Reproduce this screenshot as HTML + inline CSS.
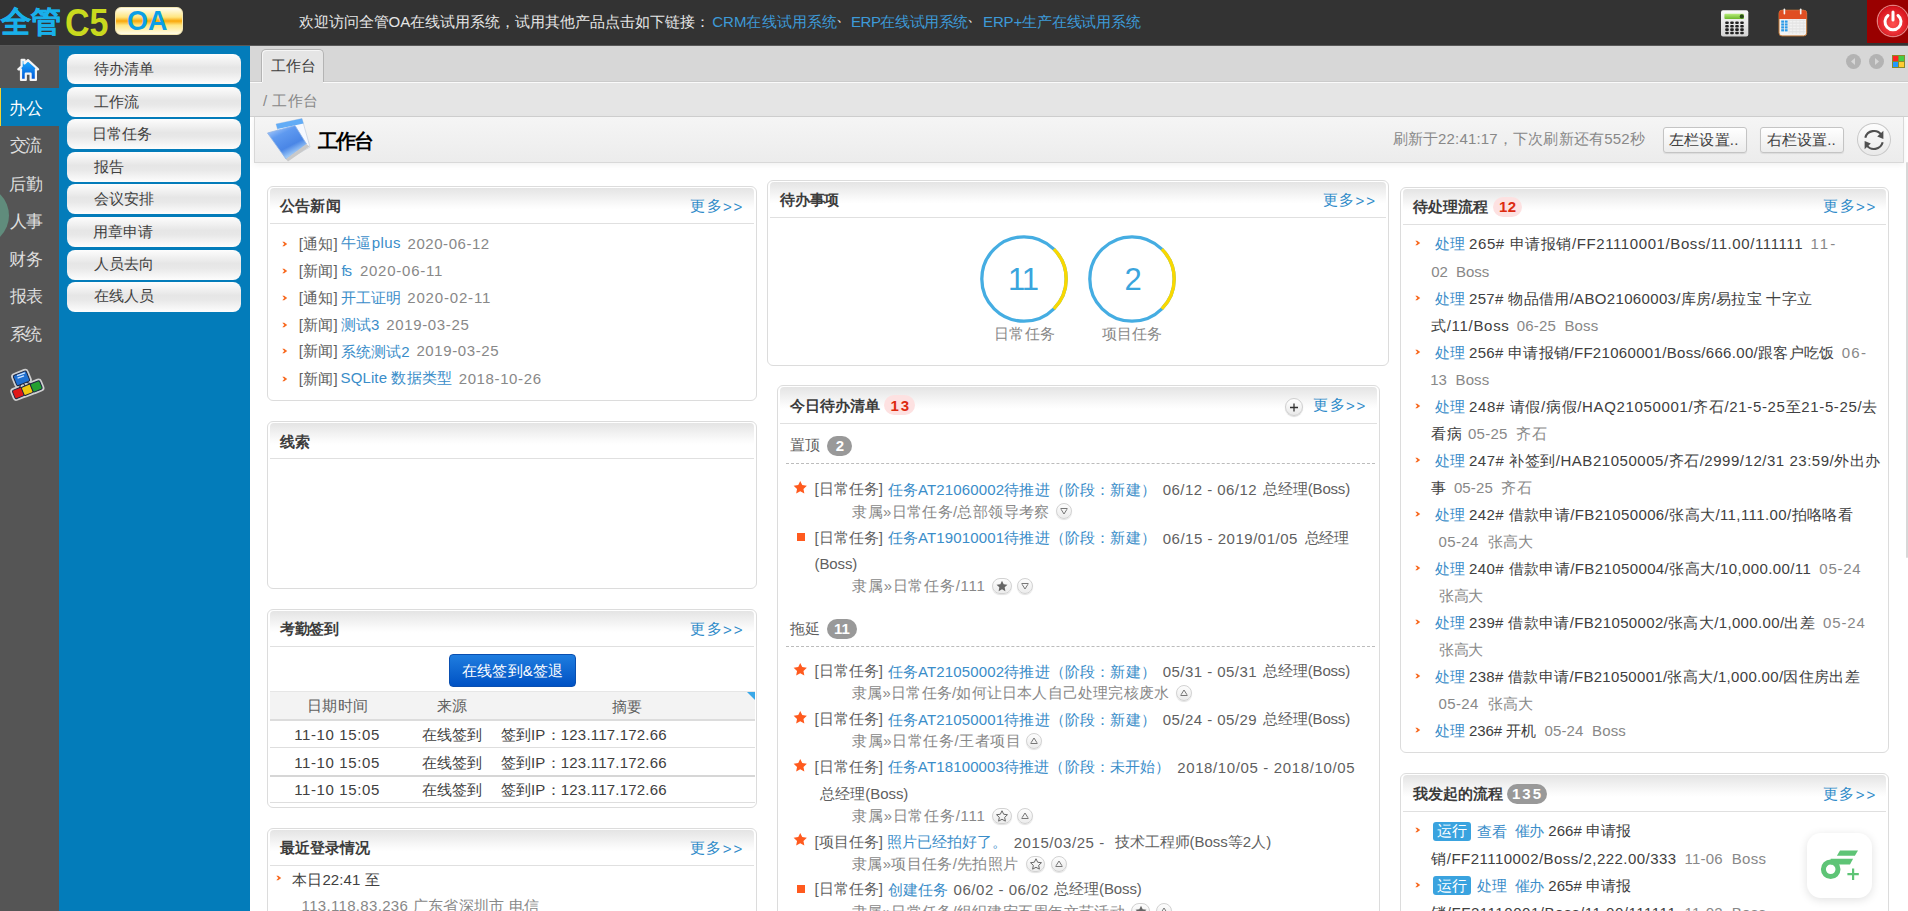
<!DOCTYPE html>
<html><head><meta charset="utf-8">
<style>
*{box-sizing:border-box}
html,body{margin:0;padding:0}
body{width:1908px;height:911px;overflow:hidden;position:relative;background:#fff;font-family:"Liberation Sans",sans-serif;font-size:15px;color:#333}
.a{position:absolute}
#hdr{left:0;top:0;width:1908px;height:46px;background:#333;border-bottom:1px solid #595959}
#nav{left:0;top:46px;width:59px;height:865px;background:#555}
#menu{left:59px;top:46px;width:191px;height:865px;background:#037cba}
#tabbar{left:250px;top:46px;width:1658px;height:36px;background:#d7d7d7;border-bottom:1px solid #cbcbcb}
#crumb{left:250px;top:82px;width:1658px;height:35px;background:#e5e5e5;border-top:1px solid #fafafa;border-bottom:1px solid #d0d0d0}
#title{left:254px;top:117px;width:1650px;height:46px;background:linear-gradient(#f5f5f5,#ececec);border:1px solid #d8d8d8;border-top:0;box-shadow:0 2px 6px rgba(0,0,0,.06)}
.btn{left:67px;width:174px;height:30px;border-radius:8px;background:linear-gradient(#fdfdfd 0%,#e6e6e6 45%,#e8e8e8 60%,#fdfdfd 100%);color:#333;font-size:15px;line-height:30px;padding-left:27px}
.nv{left:0;width:59px;text-align:left;padding-left:10px;color:#dcdcdc;font-size:16px;line-height:20px}
.pn{position:absolute;border:1px solid #dcdcdc;border-radius:6px;background:#fff;overflow:hidden}
.ph{position:absolute;left:2px;top:1px;right:2px;height:37px;border-radius:4px 4px 0 0;background:linear-gradient(#e4e4e4,#fbfbfb 50%,#fff 62%)}
.pt{position:absolute;left:12px;top:0;line-height:37px;font-weight:bold;color:#333;font-size:15px}
.more{position:absolute;right:14px;top:0;line-height:37px;color:#2e8ac8;font-size:15px}
.lk{color:#2e8ac8}
.gr{color:#777}
.tb{width:84px;height:26px;border:1px solid #c4c4c4;border-radius:3px;background:linear-gradient(#fff,#ececec);line-height:24px;text-align:center;color:#333;font-size:15px;box-shadow:0 1px 1px rgba(0,0,0,.08)}
</style></head><body>
<div id="hdr" class="a">
<div class="a" style="left:1px;top:3px;width:64px;height:36px;font-weight:900;font-size:30px;line-height:38px;color:#19b0ea;-webkit-text-stroke:0.5px #19b0ea;letter-spacing:0px;white-space:nowrap">全管</div>
<div class="a" style="left:65px;top:3px;height:36px;font-weight:bold;font-size:34px;line-height:38px;color:#c9da1e;transform:scaleY(1.12);transform-origin:0 50%;white-space:nowrap">C5</div>
<div class="a" style="left:115px;top:7px;width:68px;height:28px;border-radius:6px;background:linear-gradient(#fffef4 0%,#ffe680 35%,#f9a70a 50%,#ffe680 66%,#fffbe8 100%);border:1px solid #f3e6b0"></div>
<div class="a" style="left:127px;top:5px;font-weight:bold;font-size:27px;line-height:32px;color:#0b9fe6;white-space:nowrap">OA</div>
<svg class="a" style="left:1720px;top:9px" width="30" height="29" viewBox="0 0 30 29"><defs><linearGradient id="cg" x1="0" y1="0" x2="0" y2="1"><stop offset="0" stop-color="#fafafa"/><stop offset="1" stop-color="#d4d4d4"/></linearGradient><linearGradient id="cd" x1="0" y1="0" x2="0" y2="1"><stop offset="0" stop-color="#b8ec7a"/><stop offset="1" stop-color="#6cb82c"/></linearGradient></defs><rect x="1" y="1.2" width="27.3" height="26.2" rx="2" fill="url(#cg)"/><rect x="4.4" y="4.8" width="19.6" height="5.2" rx="1" fill="url(#cd)"/><circle cx="21.8" cy="7.4" r="2.1" fill="#2a4a1a"/><rect x="5.2" y="12.5" width="3.6" height="2.6" rx="1" fill="#222"/><rect x="10.2" y="12.5" width="3.6" height="2.6" rx="1" fill="#222"/><rect x="15.2" y="12.5" width="3.6" height="2.6" rx="1" fill="#222"/><rect x="20.2" y="12.5" width="3.6" height="2.6" rx="1" fill="#222"/><rect x="5.2" y="15.9" width="3.6" height="2.6" rx="1" fill="#222"/><rect x="10.2" y="15.9" width="3.6" height="2.6" rx="1" fill="#222"/><rect x="15.2" y="15.9" width="3.6" height="2.6" rx="1" fill="#222"/><rect x="20.2" y="15.9" width="3.6" height="2.6" rx="1" fill="#222"/><rect x="5.2" y="19.3" width="3.6" height="2.6" rx="1" fill="#222"/><rect x="10.2" y="19.3" width="3.6" height="2.6" rx="1" fill="#222"/><rect x="15.2" y="19.3" width="3.6" height="2.6" rx="1" fill="#222"/><rect x="20.2" y="19.3" width="3.6" height="2.6" rx="1" fill="#222"/><rect x="5.2" y="22.7" width="3.6" height="2.6" rx="1" fill="#222"/><rect x="10.2" y="22.7" width="3.6" height="2.6" rx="1" fill="#222"/><rect x="15.2" y="22.7" width="3.6" height="2.6" rx="1" fill="#222"/><rect x="20.2" y="22.7" width="3.6" height="2.6" rx="1" fill="#222"/></svg>
<svg class="a" style="left:1778px;top:8px" width="30" height="30" viewBox="0 0 30 30"><rect x="1" y="2.2" width="27.7" height="25.7" rx="3" fill="#f2f2f2" stroke="#c07838" stroke-width="1"/><path d="M1 5.2 A3 3 0 0 1 4 2.2 H25.7 A3 3 0 0 1 28.7 5.2 V10.9 H1Z" fill="#e04e22"/><rect x="3.2" y="12.5" width="2.8" height="2.2" fill="#2a9ae8"/><rect x="6.8" y="12.5" width="2.8" height="2.2" fill="#2a9ae8"/><rect x="3.2" y="15.4" width="2.8" height="2.2" fill="#2a9ae8"/><rect x="6.8" y="15.4" width="2.8" height="2.2" fill="#2a9ae8"/><rect x="3.2" y="18.3" width="2.8" height="2.2" fill="#2a9ae8"/><rect x="6.8" y="18.3" width="2.8" height="2.2" fill="#2a9ae8"/><rect x="3.2" y="21.2" width="2.8" height="2.2" fill="#2a9ae8"/><rect x="6.8" y="21.2" width="2.8" height="2.2" fill="#2a9ae8"/><line x1="10.5" y1="12.2" x2="27.5" y2="12.2" stroke="#dadada" stroke-width="0.7"/><line x1="10.5" y1="15.1" x2="27.5" y2="15.1" stroke="#dadada" stroke-width="0.7"/><line x1="10.5" y1="18.0" x2="27.5" y2="18.0" stroke="#dadada" stroke-width="0.7"/><line x1="10.5" y1="20.9" x2="27.5" y2="20.9" stroke="#dadada" stroke-width="0.7"/><line x1="10.5" y1="23.8" x2="27.5" y2="23.8" stroke="#dadada" stroke-width="0.7"/><line x1="11.0" y1="11.5" x2="11.0" y2="26" stroke="#e2e2e2" stroke-width="0.7"/><line x1="14.6" y1="11.5" x2="14.6" y2="26" stroke="#e2e2e2" stroke-width="0.7"/><line x1="18.2" y1="11.5" x2="18.2" y2="26" stroke="#e2e2e2" stroke-width="0.7"/><line x1="21.8" y1="11.5" x2="21.8" y2="26" stroke="#e2e2e2" stroke-width="0.7"/><line x1="25.4" y1="11.5" x2="25.4" y2="26" stroke="#e2e2e2" stroke-width="0.7"/><rect x="5.6" y="0.5" width="1.6" height="6" rx="0.8" fill="#f4f4f4"/><rect x="21.9" y="0.5" width="1.6" height="6" rx="0.8" fill="#f4f4f4"/></svg>
<div class="a" style="left:1867px;top:0;width:41px;height:43px;background:#990000"></div>
<div class="a" style="left:1878px;top:6px;width:30px;height:30px;border-radius:50%;background:radial-gradient(circle at 50% 60%,#ff5050,#d8141e 70%,#b00 100%);box-shadow:0 0 0 1.3px rgba(255,170,170,.75)"></div>
<svg class="a" style="left:1880px;top:8px" width="26" height="26" viewBox="0 0 26 26"><path d="M8 7.5 A8 8 0 1 0 18 7.5" fill="none" stroke="#fff" stroke-width="3" stroke-linecap="round"/><line x1="13" y1="4" x2="13" y2="12" stroke="#fff" stroke-width="3" stroke-linecap="round"/></svg>
</div>
<div id="nav" class="a">
<svg class="a" style="left:10px;top:4px" width="40" height="40" viewBox="0 0 40 40"><defs><linearGradient id="hg" x1="0" y1="0" x2="0" y2="1"><stop offset="0" stop-color="#1cb0ff"/><stop offset="1" stop-color="#0052d6"/></linearGradient></defs><path d="M8.3 19.3 L11.6 16.2 L11.6 9.8 L14.5 9.8 L14.5 13.4 L18 10.1 L28.1 19.3 L25.9 19.3 L25.9 29.9 L20.6 29.9 L20.6 23.7 L15.8 23.7 L15.8 29.9 L11 29.9 L11 19.3 Z" fill="url(#hg)" stroke="#f4f4f4" stroke-width="2.2" stroke-linejoin="round"/></svg>
<div class="a" style="left:0;top:42px;width:59px;height:38px;background:#037cba;border-left:1px solid #f2d230"></div>
<div class="a" style="left:-50.3px;top:140.3px;width:58.8px;height:58.8px;border-radius:50%;background:rgb(96,140,124)"></div>
<svg class="a" style="left:5px;top:314px" width="50" height="50" viewBox="0 0 50 50"><path d="M16.5 20 L13.4 33 M16.5 20 L22.4 29.8 M16.5 20 L31.3 26.4" stroke="#ccc" stroke-width="6"/><rect x="9.5" y="12.8" width="14" height="11" rx="1.5" fill="#cfcfcf" stroke="#cfcfcf" stroke-width="4.5" transform="rotate(-22 16.5 18.3)"/><rect x="8.4" y="28.5" width="10" height="9" rx="1.5" fill="#cfcfcf" stroke="#cfcfcf" stroke-width="4.5" transform="rotate(-22 13.4 33)"/><rect x="17.4" y="25.3" width="10" height="9" rx="1.5" fill="#cfcfcf" stroke="#cfcfcf" stroke-width="4.5" transform="rotate(-22 22.4 29.8)"/><rect x="26.3" y="21.9" width="10" height="9" rx="1.5" fill="#cfcfcf" stroke="#cfcfcf" stroke-width="4.5" transform="rotate(-22 31.3 26.4)"/><path d="M16.5 20 L13.4 33 M16.5 20 L22.4 29.8 M16.5 20 L31.3 26.4" stroke="#334" stroke-width="1.2"/><rect x="9.5" y="12.8" width="14" height="11" rx="1.5" fill="#1f6fd0" stroke="#1a2440" stroke-width="1" transform="rotate(-22 16.5 18.3)"/><rect x="8.4" y="28.5" width="10" height="9" rx="1.5" fill="#e01818" stroke="#1a2440" stroke-width="1" transform="rotate(-22 13.4 33)"/><rect x="17.4" y="25.3" width="10" height="9" rx="1.5" fill="#f2c810" stroke="#1a2440" stroke-width="1" transform="rotate(-22 22.4 29.8)"/><rect x="26.3" y="21.9" width="10" height="9" rx="1.5" fill="#23a030" stroke="#1a2440" stroke-width="1" transform="rotate(-22 31.3 26.4)"/><path d="M12 15.5 L20 13 M12.5 18 L19 16" stroke="#cfe4ff" stroke-width="1.3" transform="rotate(-2 16 16)"/></svg>
</div>
<div id="menu" class="a"></div>
<div class="a btn" style="top:54.0px"></div>
<div class="a btn" style="top:86.6px"></div>
<div class="a btn" style="top:119.2px"></div>
<div class="a btn" style="top:151.8px"></div>
<div class="a btn" style="top:184.4px"></div>
<div class="a btn" style="top:217.0px"></div>
<div class="a btn" style="top:249.6px"></div>
<div class="a btn" style="top:282.2px"></div>
<div id="tabbar" class="a">
<div class="a" style="left:11px;top:3px;width:63px;height:34px;background:#e5e5e5;border:1px solid #b4b4b4;border-bottom:0;border-radius:5px 5px 0 0;box-shadow:inset 1px 1px 0 #f6f6f6"></div>
<div class="a" style="left:1596px;top:8px;width:15px;height:15px;border-radius:50%;background:#b3b3b3"></div>
<svg class="a" style="left:1596px;top:8px" width="15" height="15"><path d="M9 4 L5 7.5 L9 11Z" fill="#d6d6d6"/></svg>
<div class="a" style="left:1619px;top:8px;width:15px;height:15px;border-radius:50%;background:#b3b3b3"></div>
<svg class="a" style="left:1619px;top:8px" width="15" height="15"><path d="M6 4 L10 7.5 L6 11Z" fill="#d6d6d6"/></svg>
<div class="a" style="left:1642px;top:9px;width:13px;height:13px;background:#8a8a2a;padding:1px;display:grid;grid-template-columns:1fr 1fr;gap:1px"><i style="background:#f22"></i><i style="background:#4c4"></i><i style="background:#29f"></i><i style="background:#fc3"></i></div>
</div>
<div id="crumb" class="a">
<div class="a" style="left:12px;top:-1px;width:61px;height:1px;background:#e5e5e5"></div>
</div>
<div id="title" class="a">
<svg class="a" style="left:11px;top:0px" width="48" height="46" viewBox="0 0 48 46"><defs><linearGradient id="fg" x1="0" y1="0" x2="0.6" y2="1"><stop offset="0" stop-color="#c4dcff"/><stop offset=".35" stop-color="#5f9af0"/><stop offset=".7" stop-color="#4a86e6"/><stop offset="1" stop-color="#bfe4ff"/></linearGradient></defs>
<path d="M10 7 L36 1.5 L44 30 L21 43 Z" fill="#f6f9ff" stroke="#c8d2e0" stroke-width="0.8"/><path d="M10 7 L36 1.5 L37.5 6.5 L11.5 12 Z" fill="#62acf6"/>
<path d="M1.5 16 L29 8.5 L40.5 27 L20 42 Z" fill="url(#fg)" stroke="#8fb4e6" stroke-width="0.8"/><path d="M20 42 L40.5 27 L43.5 29.5 L22 44.5Z" fill="#c9c9c9"/></svg>
<div class="a tb" style="left:1408px;top:10px"></div>
<div class="a tb" style="left:1505px;top:10px"></div>
<div class="a" style="left:1602px;top:6px;width:33.6px;height:33.4px;border-radius:50%;background:linear-gradient(#fdfdfd,#e9e9e9);border:1px solid #c8c8c8"></div><svg class="a" style="left:1602px;top:5.5px" width="34" height="34" viewBox="0 0 34 34"><path d="M8.31 14.67 A9 9 0 0 1 24.46 11.97" fill="none" stroke="#505050" stroke-width="2.1"/><path d="M20.2 13.4 L26.4 7.8 L26.4 15.9Z" fill="#505050"/><path d="M25.69 19.33 A9 9 0 0 1 9.54 22.03" fill="none" stroke="#505050" stroke-width="2.1"/><path d="M13.8 20.6 L7.6 26.2 L7.6 18.1Z" fill="#505050"/></svg>
</div>
<div class="pn" style="left:267px;top:186px;width:490px;height:215px"><div class="ph" style="height:35px"></div><div style="position:absolute;left:2px;right:2px;top:36px;height:1px;background:#e0e0e0"></div></div>
<div class="pn" style="left:267px;top:421px;width:490px;height:168px"><div class="ph" style="height:35px"></div><div style="position:absolute;left:2px;right:2px;top:36px;height:1px;background:#e0e0e0"></div></div>
<div class="pn" style="left:267px;top:609px;width:490px;height:199px"><div class="ph" style="height:35px"></div><div style="position:absolute;left:2px;right:2px;top:36px;height:1px;background:#e0e0e0"></div></div>
<div class="pn" style="left:267px;top:828px;width:490px;height:140px"><div class="ph" style="height:35px"></div><div style="position:absolute;left:2px;right:2px;top:36px;height:1px;background:#e0e0e0"></div></div>
<div class="pn" style="left:767px;top:180px;width:622px;height:186px"><div class="ph" style="height:35px"></div><div style="position:absolute;left:2px;right:2px;top:36px;height:1px;background:#e0e0e0"></div></div>
<div class="pn" style="left:777px;top:385px;width:603px;height:600px"><div class="ph" style="height:36px"></div><div style="position:absolute;left:2px;right:2px;top:37px;height:1px;background:#e0e0e0"></div></div>
<div class="pn" style="left:1400px;top:187px;width:489px;height:566px"><div class="ph" style="height:35px"></div><div style="position:absolute;left:2px;right:2px;top:36px;height:1px;background:#e0e0e0"></div></div>
<div class="pn" style="left:1400px;top:773px;width:489px;height:200px"><div class="ph" style="height:36px"></div><div style="position:absolute;left:2px;right:2px;top:37px;height:1px;background:#e0e0e0"></div></div>
<svg class="a" style="left:282px;top:240.6px" width="6" height="6" viewBox="0 0 6 6"><path d="M0.3 0.8 L2.2 0.8 L5.2 3 L2.2 5.2 L0.3 5.2 L2.3 3Z" fill="#f86a20"/></svg>
<svg class="a" style="left:282px;top:267.7px" width="6" height="6" viewBox="0 0 6 6"><path d="M0.3 0.8 L2.2 0.8 L5.2 3 L2.2 5.2 L0.3 5.2 L2.3 3Z" fill="#f86a20"/></svg>
<svg class="a" style="left:282px;top:294.6px" width="6" height="6" viewBox="0 0 6 6"><path d="M0.3 0.8 L2.2 0.8 L5.2 3 L2.2 5.2 L0.3 5.2 L2.3 3Z" fill="#f86a20"/></svg>
<svg class="a" style="left:282px;top:321.5px" width="6" height="6" viewBox="0 0 6 6"><path d="M0.3 0.8 L2.2 0.8 L5.2 3 L2.2 5.2 L0.3 5.2 L2.3 3Z" fill="#f86a20"/></svg>
<svg class="a" style="left:282px;top:348.2px" width="6" height="6" viewBox="0 0 6 6"><path d="M0.3 0.8 L2.2 0.8 L5.2 3 L2.2 5.2 L0.3 5.2 L2.3 3Z" fill="#f86a20"/></svg>
<svg class="a" style="left:282px;top:375.6px" width="6" height="6" viewBox="0 0 6 6"><path d="M0.3 0.8 L2.2 0.8 L5.2 3 L2.2 5.2 L0.3 5.2 L2.3 3Z" fill="#f86a20"/></svg>
<svg class="a" style="left:1415px;top:240px" width="6" height="6" viewBox="0 0 6 6"><path d="M0.3 0.8 L2.2 0.8 L5.2 3 L2.2 5.2 L0.3 5.2 L2.3 3Z" fill="#f86a20"/></svg>
<svg class="a" style="left:1415px;top:295px" width="6" height="6" viewBox="0 0 6 6"><path d="M0.3 0.8 L2.2 0.8 L5.2 3 L2.2 5.2 L0.3 5.2 L2.3 3Z" fill="#f86a20"/></svg>
<svg class="a" style="left:1415px;top:349px" width="6" height="6" viewBox="0 0 6 6"><path d="M0.3 0.8 L2.2 0.8 L5.2 3 L2.2 5.2 L0.3 5.2 L2.3 3Z" fill="#f86a20"/></svg>
<svg class="a" style="left:1415px;top:403px" width="6" height="6" viewBox="0 0 6 6"><path d="M0.3 0.8 L2.2 0.8 L5.2 3 L2.2 5.2 L0.3 5.2 L2.3 3Z" fill="#f86a20"/></svg>
<svg class="a" style="left:1415px;top:457px" width="6" height="6" viewBox="0 0 6 6"><path d="M0.3 0.8 L2.2 0.8 L5.2 3 L2.2 5.2 L0.3 5.2 L2.3 3Z" fill="#f86a20"/></svg>
<svg class="a" style="left:1415px;top:511px" width="6" height="6" viewBox="0 0 6 6"><path d="M0.3 0.8 L2.2 0.8 L5.2 3 L2.2 5.2 L0.3 5.2 L2.3 3Z" fill="#f86a20"/></svg>
<svg class="a" style="left:1415px;top:565px" width="6" height="6" viewBox="0 0 6 6"><path d="M0.3 0.8 L2.2 0.8 L5.2 3 L2.2 5.2 L0.3 5.2 L2.3 3Z" fill="#f86a20"/></svg>
<svg class="a" style="left:1415px;top:619px" width="6" height="6" viewBox="0 0 6 6"><path d="M0.3 0.8 L2.2 0.8 L5.2 3 L2.2 5.2 L0.3 5.2 L2.3 3Z" fill="#f86a20"/></svg>
<svg class="a" style="left:1415px;top:673px" width="6" height="6" viewBox="0 0 6 6"><path d="M0.3 0.8 L2.2 0.8 L5.2 3 L2.2 5.2 L0.3 5.2 L2.3 3Z" fill="#f86a20"/></svg>
<svg class="a" style="left:1415px;top:727px" width="6" height="6" viewBox="0 0 6 6"><path d="M0.3 0.8 L2.2 0.8 L5.2 3 L2.2 5.2 L0.3 5.2 L2.3 3Z" fill="#f86a20"/></svg>
<svg class="a" style="left:1415px;top:827.4px" width="6" height="6" viewBox="0 0 6 6"><path d="M0.3 0.8 L2.2 0.8 L5.2 3 L2.2 5.2 L0.3 5.2 L2.3 3Z" fill="#f86a20"/></svg>
<svg class="a" style="left:1415px;top:882px" width="6" height="6" viewBox="0 0 6 6"><path d="M0.3 0.8 L2.2 0.8 L5.2 3 L2.2 5.2 L0.3 5.2 L2.3 3Z" fill="#f86a20"/></svg>
<svg class="a" style="left:275.5px;top:875px" width="6" height="6" viewBox="0 0 6 6"><path d="M0.3 0.8 L2.2 0.8 L5.2 3 L2.2 5.2 L0.3 5.2 L2.3 3Z" fill="#f86a20"/></svg>
<div class="a" style="left:883.9px;top:395px;width:31.1px;height:20px;border-radius:10px;background:#fde1e1"></div>
<div class="a" style="left:827.2px;top:436px;width:24.8px;height:20px;border-radius:10px;background:#999"></div>
<div class="a" style="left:827.2px;top:618.5px;width:30.3px;height:20px;border-radius:10px;background:#999"></div>
<div class="a" style="left:1492.8px;top:196.5px;width:29.6px;height:20px;border-radius:10px;background:#fde1e1"></div>
<div class="a" style="left:1507.4px;top:783.5px;width:39.6px;height:20px;border-radius:10px;background:#999"></div>
<div class="a" style="left:1433.2px;top:821.8px;width:37.6px;height:19px;border-radius:3px;background:#3aa3df"></div>
<div class="a" style="left:1433.2px;top:876.3px;width:37.6px;height:19px;border-radius:3px;background:#3aa3df"></div>
<div class="a" style="left:1285px;top:397.5px;width:18px;height:18px;border-radius:50%;background:linear-gradient(#fff,#e9e9e9);border:1px solid #cfcfcf;box-shadow:0 1px 1px rgba(0,0,0,.15)"></div>
<svg class="a" style="left:1285px;top:397.5px" width="18" height="18"><path d="M5 9.5 H13 M9 5.5 V13.5" stroke="#333" stroke-width="1.3"/></svg>
<div class="a" style="left:786px;top:463px;width:589px;height:0;border-top:1px dashed #bcbcbc"></div>
<div class="a" style="left:786px;top:645.5px;width:589px;height:0;border-top:1px dashed #bcbcbc"></div>
<svg class="a" style="left:793.3px;top:479.55px" width="14.5" height="14.5" viewBox="0 0 24 24"><path d="M12.00 1.50 L15.29 8.47 L22.94 9.45 L17.33 14.73 L18.76 22.30 L12.00 18.60 L5.24 22.30 L6.67 14.73 L1.06 9.45 L8.71 8.47Z" fill="#ff5a1e"/></svg>
<div class="a" style="left:796.5px;top:532.8px;width:8.5px;height:8.5px;background:#ff5a1e"></div>
<svg class="a" style="left:793.3px;top:661.55px" width="14.5" height="14.5" viewBox="0 0 24 24"><path d="M12.00 1.50 L15.29 8.47 L22.94 9.45 L17.33 14.73 L18.76 22.30 L12.00 18.60 L5.24 22.30 L6.67 14.73 L1.06 9.45 L8.71 8.47Z" fill="#ff5a1e"/></svg>
<svg class="a" style="left:793.3px;top:709.55px" width="14.5" height="14.5" viewBox="0 0 24 24"><path d="M12.00 1.50 L15.29 8.47 L22.94 9.45 L17.33 14.73 L18.76 22.30 L12.00 18.60 L5.24 22.30 L6.67 14.73 L1.06 9.45 L8.71 8.47Z" fill="#ff5a1e"/></svg>
<svg class="a" style="left:793.3px;top:757.55px" width="14.5" height="14.5" viewBox="0 0 24 24"><path d="M12.00 1.50 L15.29 8.47 L22.94 9.45 L17.33 14.73 L18.76 22.30 L12.00 18.60 L5.24 22.30 L6.67 14.73 L1.06 9.45 L8.71 8.47Z" fill="#ff5a1e"/></svg>
<svg class="a" style="left:793.3px;top:832.05px" width="14.5" height="14.5" viewBox="0 0 24 24"><path d="M12.00 1.50 L15.29 8.47 L22.94 9.45 L17.33 14.73 L18.76 22.30 L12.00 18.60 L5.24 22.30 L6.67 14.73 L1.06 9.45 L8.71 8.47Z" fill="#ff5a1e"/></svg>
<div class="a" style="left:796.5px;top:884.5px;width:8.5px;height:8.5px;background:#ff5a1e"></div>
<div class="a" style="left:1056px;top:503px;width:15.5px;height:16px;border-radius:8px;background:linear-gradient(#fdfdfd,#ececec);border:1px solid #d2d2d2;box-shadow:0 1px 1px rgba(0,0,0,.12)"></div>
<svg class="a" style="left:1058.75px;top:506px" width="10" height="10"><path d="M1.5 2.5 H8.5 M2 3.2 L5 8 L8 3.2" stroke="#777" stroke-width="1" fill="none"/></svg>
<div class="a" style="left:992.3px;top:577.7px;width:19.4px;height:16px;border-radius:8px;background:linear-gradient(#fdfdfd,#ececec);border:1px solid #d2d2d2;box-shadow:0 1px 1px rgba(0,0,0,.12)"></div>
<svg class="a" style="left:996px;top:579.7px" width="12" height="12" viewBox="0 0 24 24"><path d="M12.00 1.50 L15.29 8.47 L22.94 9.45 L17.33 14.73 L18.76 22.30 L12.00 18.60 L5.24 22.30 L6.67 14.73 L1.06 9.45 L8.71 8.47Z" fill="#666"/></svg>
<div class="a" style="left:1017.3px;top:577.7px;width:15.5px;height:16px;border-radius:8px;background:linear-gradient(#fdfdfd,#ececec);border:1px solid #d2d2d2;box-shadow:0 1px 1px rgba(0,0,0,.12)"></div>
<svg class="a" style="left:1020.05px;top:580.7px" width="10" height="10"><path d="M1.5 2.5 H8.5 M2 3.2 L5 8 L8 3.2" stroke="#777" stroke-width="1" fill="none"/></svg>
<div class="a" style="left:1176px;top:684.6px;width:15.5px;height:16px;border-radius:8px;background:linear-gradient(#fdfdfd,#ececec);border:1px solid #d2d2d2;box-shadow:0 1px 1px rgba(0,0,0,.12)"></div>
<svg class="a" style="left:1178.75px;top:687.6px" width="10" height="10"><path d="M1.5 7.5 H8.5 M2 6.8 L5 2 L8 6.8" stroke="#777" stroke-width="1" fill="none"/></svg>
<div class="a" style="left:1026px;top:732.7px;width:15.5px;height:16px;border-radius:8px;background:linear-gradient(#fdfdfd,#ececec);border:1px solid #d2d2d2;box-shadow:0 1px 1px rgba(0,0,0,.12)"></div>
<svg class="a" style="left:1028.75px;top:735.7px" width="10" height="10"><path d="M1.5 7.5 H8.5 M2 6.8 L5 2 L8 6.8" stroke="#777" stroke-width="1" fill="none"/></svg>
<div class="a" style="left:992.3px;top:807.5px;width:19.4px;height:16px;border-radius:8px;background:linear-gradient(#fdfdfd,#ececec);border:1px solid #d2d2d2;box-shadow:0 1px 1px rgba(0,0,0,.12)"></div>
<svg class="a" style="left:996px;top:809.5px" width="12" height="12" viewBox="0 0 24 24"><path d="M12.00 1.50 L15.29 8.47 L22.94 9.45 L17.33 14.73 L18.76 22.30 L12.00 18.60 L5.24 22.30 L6.67 14.73 L1.06 9.45 L8.71 8.47Z" fill="none" stroke="#666" stroke-width="2"/></svg>
<div class="a" style="left:1017.3px;top:807.5px;width:15.5px;height:16px;border-radius:8px;background:linear-gradient(#fdfdfd,#ececec);border:1px solid #d2d2d2;box-shadow:0 1px 1px rgba(0,0,0,.12)"></div>
<svg class="a" style="left:1020.05px;top:810.5px" width="10" height="10"><path d="M1.5 7.5 H8.5 M2 6.8 L5 2 L8 6.8" stroke="#777" stroke-width="1" fill="none"/></svg>
<div class="a" style="left:1026px;top:855.6px;width:19.4px;height:16px;border-radius:8px;background:linear-gradient(#fdfdfd,#ececec);border:1px solid #d2d2d2;box-shadow:0 1px 1px rgba(0,0,0,.12)"></div>
<svg class="a" style="left:1029.7px;top:857.6px" width="12" height="12" viewBox="0 0 24 24"><path d="M12.00 1.50 L15.29 8.47 L22.94 9.45 L17.33 14.73 L18.76 22.30 L12.00 18.60 L5.24 22.30 L6.67 14.73 L1.06 9.45 L8.71 8.47Z" fill="none" stroke="#666" stroke-width="2"/></svg>
<div class="a" style="left:1051px;top:855.6px;width:15.5px;height:16px;border-radius:8px;background:linear-gradient(#fdfdfd,#ececec);border:1px solid #d2d2d2;box-shadow:0 1px 1px rgba(0,0,0,.12)"></div>
<svg class="a" style="left:1053.75px;top:858.6px" width="10" height="10"><path d="M1.5 7.5 H8.5 M2 6.8 L5 2 L8 6.8" stroke="#777" stroke-width="1" fill="none"/></svg>
<div class="a" style="left:1131px;top:902.5px;width:19.4px;height:16px;border-radius:8px;background:linear-gradient(#fdfdfd,#ececec);border:1px solid #d2d2d2;box-shadow:0 1px 1px rgba(0,0,0,.12)"></div>
<svg class="a" style="left:1134.7px;top:904.5px" width="12" height="12" viewBox="0 0 24 24"><path d="M12.00 1.50 L15.29 8.47 L22.94 9.45 L17.33 14.73 L18.76 22.30 L12.00 18.60 L5.24 22.30 L6.67 14.73 L1.06 9.45 L8.71 8.47Z" fill="#666"/></svg>
<div class="a" style="left:1156px;top:902.5px;width:15.5px;height:16px;border-radius:8px;background:linear-gradient(#fdfdfd,#ececec);border:1px solid #d2d2d2;box-shadow:0 1px 1px rgba(0,0,0,.12)"></div>
<svg class="a" style="left:1158.75px;top:905.5px" width="10" height="10"><path d="M1.5 7.5 H8.5 M2 6.8 L5 2 L8 6.8" stroke="#777" stroke-width="1" fill="none"/></svg>
<svg class="a" style="left:979.4px;top:233.6px" width="90" height="90" viewBox="0 0 90 90"><circle cx="45" cy="45" r="42.2" fill="none" stroke="#45ade2" stroke-width="3.3"/><path d="M74.84 15.16 A42.2 42.2 0 0 1 74.84 74.84" fill="none" stroke="#f9d800" stroke-width="3.4"/></svg>
<svg class="a" style="left:1087.1px;top:233.6px" width="90" height="90" viewBox="0 0 90 90"><circle cx="45" cy="45" r="42.2" fill="none" stroke="#45ade2" stroke-width="3.3"/><path d="M74.84 15.16 A42.2 42.2 0 0 1 74.84 74.84" fill="none" stroke="#f9d800" stroke-width="3.4"/></svg>
<div class="a" style="left:449px;top:654px;width:127px;height:33px;border-radius:4px;background:linear-gradient(#1f7ddf,#0052c4);border:1px solid #0a4fb0"></div>
<div class="a" style="left:270px;top:691px;width:485px;height:30px;background:#f3f3f3;border-bottom:2px solid #dcdcdc;border-top:1px solid #e6e6e6"></div>
<svg class="a" style="left:747px;top:692px" width="8" height="8"><path d="M0 0 H8 V8Z" fill="#3aa8e8"/></svg>
<div class="a" style="left:270px;top:747px;width:485px;height:1px;background:#dedede"></div>
<div class="a" style="left:270px;top:774.5px;width:485px;height:1px;background:#dedede"></div>
<div class="a" style="left:270px;top:802px;width:485px;height:1px;background:#dedede"></div>
<div class="a" style="left:270px;top:774.5px;width:485px;height:2px;background:#d6d6d6"></div>
<div class="a" style="left:1807px;top:833px;width:65px;height:65px;border-radius:14px;background:#fff;box-shadow:0 2px 10px rgba(0,0,0,.12)"></div>
<svg class="a" style="left:1807px;top:833px" width="65" height="65" viewBox="0 0 65 65"><circle cx="23.7" cy="36.3" r="7.3" fill="none" stroke="#5ec476" stroke-width="5"/><path d="M23.7 25.8 L46.1 25.8 L43 31.5 L23.7 31.5Z" fill="#5ec476"/><path d="M29.9 22.7 L33 17.5 L51 17.5 L47.9 22.7Z" fill="#5ec476"/><path d="M40.4 41.2 H51.8 M46.1 35.5 V46.9" stroke="#5ec476" stroke-width="2.2"/></svg>
<div class="a" style="left:1906px;top:162px;width:2px;height:396px;background:#d8d8d8;border-radius:1px"></div>
<div class="a" style="left:298.5px;top:11.8px;line-height:20px;white-space:pre;color:#e6e6e6;font-size:15px;">欢迎访问全管OA在线试用系统，试用其他产品点击如下链接：</div>
<div class="a" style="left:712.2px;top:11.8px;line-height:20px;white-space:pre;color:#3d9ad8;font-size:15px;letter-spacing:0.05px;">CRM在线试用系统</div>
<div class="a" style="left:835.5px;top:5.8px;line-height:20px;white-space:pre;color:#e6e6e6;font-size:15px;">、</div>
<div class="a" style="left:851.0px;top:11.8px;line-height:20px;white-space:pre;color:#3d9ad8;font-size:15px;letter-spacing:-0.45px;">ERP在线试用系统</div>
<div class="a" style="left:967.0px;top:5.8px;line-height:20px;white-space:pre;color:#e6e6e6;font-size:15px;">、</div>
<div class="a" style="left:983.1px;top:11.8px;line-height:20px;white-space:pre;color:#3d9ad8;font-size:15px;letter-spacing:-0.16px;">ERP+生产在线试用系统</div>
<div class="a" style="left:8.7px;top:98.0px;line-height:20px;white-space:pre;color:#fff;font-size:16.5px;letter-spacing:0.60px;">办公</div>
<div class="a" style="left:9.7px;top:135.2px;line-height:20px;white-space:pre;color:#dedede;font-size:16.5px;letter-spacing:-1.40px;">交流</div>
<div class="a" style="left:8.7px;top:173.6px;line-height:20px;white-space:pre;color:#dedede;font-size:16.5px;letter-spacing:0.60px;">后勤</div>
<div class="a" style="left:9.7px;top:210.8px;line-height:20px;white-space:pre;color:#dedede;font-size:16.5px;letter-spacing:-0.40px;">人事</div>
<div class="a" style="left:8.7px;top:249.2px;line-height:20px;white-space:pre;color:#dedede;font-size:16.5px;letter-spacing:0.60px;">财务</div>
<div class="a" style="left:9.7px;top:286.2px;line-height:20px;white-space:pre;color:#dedede;font-size:16.5px;letter-spacing:-0.40px;">报表</div>
<div class="a" style="left:9.7px;top:324.1px;line-height:20px;white-space:pre;color:#dedede;font-size:16.5px;letter-spacing:-1.40px;">系统</div>
<div class="a" style="left:94.0px;top:58.6px;line-height:20px;white-space:pre;color:#404040;font-size:15px;">待办清单</div>
<div class="a" style="left:94.0px;top:91.6px;line-height:20px;white-space:pre;color:#404040;font-size:15px;">工作流</div>
<div class="a" style="left:92.0px;top:123.6px;line-height:20px;white-space:pre;color:#404040;font-size:15px;">日常任务</div>
<div class="a" style="left:94.0px;top:156.6px;line-height:20px;white-space:pre;color:#404040;font-size:15px;">报告</div>
<div class="a" style="left:94.0px;top:189.1px;line-height:20px;white-space:pre;color:#404040;font-size:15px;">会议安排</div>
<div class="a" style="left:93.0px;top:221.6px;line-height:20px;white-space:pre;color:#404040;font-size:15px;">用章申请</div>
<div class="a" style="left:94.0px;top:253.6px;line-height:20px;white-space:pre;color:#404040;font-size:15px;">人员去向</div>
<div class="a" style="left:94.0px;top:286.1px;line-height:20px;white-space:pre;color:#404040;font-size:15px;">在线人员</div>
<div class="a" style="left:270.7px;top:56.1px;line-height:20px;white-space:pre;color:#404040;font-size:15px;letter-spacing:0.05px;">工作台</div>
<div class="a" style="left:263.0px;top:90.7px;line-height:20px;white-space:pre;color:#888;font-size:15px;letter-spacing:0.45px;">/ 工作台</div>
<div class="a" style="left:318.0px;top:130.5px;line-height:20px;white-space:pre;font-weight:bold;color:#000;font-size:19.5px;letter-spacing:-1.80px;">工作台</div>
<div class="a" style="left:1392.5px;top:129.0px;line-height:20px;white-space:pre;color:#888;font-size:15px;letter-spacing:0.18px;">刷新于22:41:17，下次刷新还有552秒</div>
<div class="a" style="left:1669.0px;top:129.6px;line-height:20px;white-space:pre;color:#404040;font-size:15px;letter-spacing:0.20px;">左栏设置..</div>
<div class="a" style="left:1766.8px;top:129.6px;line-height:20px;white-space:pre;color:#404040;font-size:15px;letter-spacing:0.10px;">右栏设置..</div>
<div class="a" style="left:280.3px;top:196.0px;line-height:20px;white-space:pre;font-weight:bold;color:#3c3c3c;font-size:15px;letter-spacing:0.07px;">公告新闻</div>
<div class="a" style="left:690.0px;top:196.0px;line-height:20px;white-space:pre;color:#2f8bc9;font-size:15px;letter-spacing:1.50px;">更多</div>
<div class="a" style="left:722.9px;top:197.0px;line-height:20px;white-space:pre;color:#2f8bc9;font-size:15px;letter-spacing:1.90px;">&gt;&gt;</div>
<div class="a" style="left:298.7px;top:233.6px;line-height:20px;white-space:pre;color:#5f5f5f;font-size:15px;letter-spacing:0.20px;">[通知]</div>
<div class="a" style="left:341.0px;top:233.1px;line-height:20px;white-space:pre;color:#3a8dc9;font-size:15px;letter-spacing:0.42px;">牛逼plus</div>
<div class="a" style="left:407.6px;top:233.6px;line-height:20px;white-space:pre;color:#888;font-size:15px;letter-spacing:0.54px;">2020-06-12</div>
<div class="a" style="left:298.7px;top:260.7px;line-height:20px;white-space:pre;color:#5f5f5f;font-size:15px;letter-spacing:0.20px;">[新闻]</div>
<div class="a" style="left:341.5px;top:261.2px;line-height:20px;white-space:pre;color:#3a8dc9;font-size:15px;letter-spacing:-1.10px;">fs</div>
<div class="a" style="left:359.9px;top:260.7px;line-height:20px;white-space:pre;color:#888;font-size:15px;letter-spacing:0.76px;">2020-06-11</div>
<div class="a" style="left:298.7px;top:287.6px;line-height:20px;white-space:pre;color:#5f5f5f;font-size:15px;letter-spacing:0.20px;">[通知]</div>
<div class="a" style="left:340.9px;top:287.6px;line-height:20px;white-space:pre;color:#3a8dc9;font-size:15px;letter-spacing:0.20px;">开工证明</div>
<div class="a" style="left:407.3px;top:287.6px;line-height:20px;white-space:pre;color:#888;font-size:15px;letter-spacing:0.82px;">2020-02-11</div>
<div class="a" style="left:298.7px;top:314.5px;line-height:20px;white-space:pre;color:#5f5f5f;font-size:15px;letter-spacing:0.20px;">[新闻]</div>
<div class="a" style="left:340.9px;top:314.5px;line-height:20px;white-space:pre;color:#3a8dc9;font-size:15px;letter-spacing:0.05px;">测试3</div>
<div class="a" style="left:386.2px;top:314.5px;line-height:20px;white-space:pre;color:#888;font-size:15px;letter-spacing:0.66px;">2019-03-25</div>
<div class="a" style="left:298.7px;top:341.2px;line-height:20px;white-space:pre;color:#5f5f5f;font-size:15px;letter-spacing:0.20px;">[新闻]</div>
<div class="a" style="left:340.9px;top:341.7px;line-height:20px;white-space:pre;color:#3a8dc9;font-size:15px;letter-spacing:0.10px;">系统测试2</div>
<div class="a" style="left:416.4px;top:341.2px;line-height:20px;white-space:pre;color:#888;font-size:15px;letter-spacing:0.60px;">2019-03-25</div>
<div class="a" style="left:298.7px;top:368.6px;line-height:20px;white-space:pre;color:#5f5f5f;font-size:15px;letter-spacing:0.20px;">[新闻]</div>
<div class="a" style="left:340.5px;top:368.1px;line-height:20px;white-space:pre;color:#3a8dc9;font-size:15px;letter-spacing:0.13px;">SQLite 数据类型</div>
<div class="a" style="left:458.7px;top:368.6px;line-height:20px;white-space:pre;color:#888;font-size:15px;letter-spacing:0.62px;">2018-10-26</div>
<div class="a" style="left:279.9px;top:431.5px;line-height:20px;white-space:pre;font-weight:bold;color:#3c3c3c;font-size:15px;letter-spacing:-0.10px;">线索</div>
<div class="a" style="left:280.0px;top:618.7px;line-height:20px;white-space:pre;font-weight:bold;color:#3c3c3c;font-size:15px;letter-spacing:-0.27px;">考勤签到</div>
<div class="a" style="left:690.2px;top:618.7px;line-height:20px;white-space:pre;color:#2f8bc9;font-size:15px;letter-spacing:1.50px;">更多</div>
<div class="a" style="left:723.1px;top:619.7px;line-height:20px;white-space:pre;color:#2f8bc9;font-size:15px;letter-spacing:1.90px;">&gt;&gt;</div>
<div class="a" style="left:462.0px;top:661.0px;line-height:20px;white-space:pre;color:#fff;font-size:15px;letter-spacing:0.17px;">在线签到&amp;签退</div>
<div class="a" style="left:306.6px;top:696.0px;line-height:20px;white-space:pre;color:#5f5f5f;font-size:15px;letter-spacing:0.53px;">日期时间</div>
<div class="a" style="left:436.5px;top:696.0px;line-height:20px;white-space:pre;color:#5f5f5f;font-size:15px;letter-spacing:0.30px;">来源</div>
<div class="a" style="left:612.0px;top:696.5px;line-height:20px;white-space:pre;color:#5f5f5f;font-size:15px;letter-spacing:0.40px;">摘要</div>
<div class="a" style="left:294.2px;top:725.0px;line-height:20px;white-space:pre;color:#404040;font-size:15px;letter-spacing:0.62px;">11-10 15:05</div>
<div class="a" style="left:421.6px;top:725.0px;line-height:20px;white-space:pre;color:#404040;font-size:15px;letter-spacing:0.17px;">在线签到</div>
<div class="a" style="left:500.5px;top:725.0px;line-height:20px;white-space:pre;color:#404040;font-size:15px;letter-spacing:0.21px;">签到IP：123.117.172.66</div>
<div class="a" style="left:294.2px;top:753.0px;line-height:20px;white-space:pre;color:#404040;font-size:15px;letter-spacing:0.62px;">11-10 15:05</div>
<div class="a" style="left:421.6px;top:753.0px;line-height:20px;white-space:pre;color:#404040;font-size:15px;letter-spacing:0.17px;">在线签到</div>
<div class="a" style="left:500.5px;top:753.0px;line-height:20px;white-space:pre;color:#404040;font-size:15px;letter-spacing:0.21px;">签到IP：123.117.172.66</div>
<div class="a" style="left:294.2px;top:780.4px;line-height:20px;white-space:pre;color:#404040;font-size:15px;letter-spacing:0.62px;">11-10 15:05</div>
<div class="a" style="left:421.6px;top:780.4px;line-height:20px;white-space:pre;color:#404040;font-size:15px;letter-spacing:0.17px;">在线签到</div>
<div class="a" style="left:500.5px;top:780.4px;line-height:20px;white-space:pre;color:#404040;font-size:15px;letter-spacing:0.21px;">签到IP：123.117.172.66</div>
<div class="a" style="left:280.3px;top:838.3px;line-height:20px;white-space:pre;font-weight:bold;color:#3c3c3c;font-size:15px;">最近登录情况</div>
<div class="a" style="left:689.9px;top:838.3px;line-height:20px;white-space:pre;color:#2f8bc9;font-size:15px;letter-spacing:1.50px;">更多</div>
<div class="a" style="left:722.8px;top:839.3px;line-height:20px;white-space:pre;color:#2f8bc9;font-size:15px;letter-spacing:1.90px;">&gt;&gt;</div>
<div class="a" style="left:292.2px;top:869.5px;line-height:20px;white-space:pre;color:#404040;font-size:15px;letter-spacing:0.10px;">本日22:41 至</div>
<div class="a" style="left:301.6px;top:896.0px;line-height:20px;white-space:pre;color:#888;font-size:15px;letter-spacing:0.32px;">113.118.83.236 广东省深圳市 电信</div>
<div class="a" style="left:780.1px;top:189.5px;line-height:20px;white-space:pre;font-weight:bold;color:#3c3c3c;font-size:15px;letter-spacing:-0.20px;">待办事项</div>
<div class="a" style="left:1322.6px;top:189.5px;line-height:20px;white-space:pre;color:#2f8bc9;font-size:15px;letter-spacing:1.50px;">更多</div>
<div class="a" style="left:1355.5px;top:190.5px;line-height:20px;white-space:pre;color:#2f8bc9;font-size:15px;letter-spacing:1.90px;">&gt;&gt;</div>
<div class="a" style="left:1008.0px;top:270.0px;line-height:20px;white-space:pre;color:#3aa5dd;font-size:31px;letter-spacing:-1.20px;">11</div>
<div class="a" style="left:1124.6px;top:270.0px;line-height:20px;white-space:pre;color:#3aa5dd;font-size:31px;">2</div>
<div class="a" style="left:993.8px;top:324.4px;line-height:20px;white-space:pre;color:#888;font-size:15px;letter-spacing:0.47px;">日常任务</div>
<div class="a" style="left:1102.2px;top:324.4px;line-height:20px;white-space:pre;color:#888;font-size:15px;letter-spacing:0.10px;">项目任务</div>
<div class="a" style="left:790.0px;top:395.5px;line-height:20px;white-space:pre;font-weight:bold;color:#3c3c3c;font-size:15px;">今日待办清单</div>
<div class="a" style="left:1313.0px;top:395.0px;line-height:20px;white-space:pre;color:#2f8bc9;font-size:15px;letter-spacing:1.50px;">更多</div>
<div class="a" style="left:1345.9px;top:396.0px;line-height:20px;white-space:pre;color:#2f8bc9;font-size:15px;letter-spacing:1.90px;">&gt;&gt;</div>
<div class="a" style="left:790.0px;top:435.0px;line-height:20px;white-space:pre;color:#5f5f5f;font-size:15px;">置顶</div>
<div class="a" style="left:790.0px;top:618.6px;line-height:20px;white-space:pre;color:#5f5f5f;font-size:15px;">拖延</div>
<div class="a" style="left:814.5px;top:479.3px;line-height:20px;white-space:pre;color:#5f5f5f;font-size:15px;">[日常任务]</div>
<div class="a" style="left:887.6px;top:479.8px;line-height:20px;white-space:pre;color:#3a8dc9;font-size:15px;letter-spacing:0.16px;">任务AT21060002待推进（阶段：新建）</div>
<div class="a" style="left:1162.7px;top:480.3px;line-height:20px;white-space:pre;color:#5f5f5f;font-size:15px;letter-spacing:0.46px;">06/12 - 06/12</div>
<div class="a" style="left:1263.4px;top:479.3px;line-height:20px;white-space:pre;color:#5f5f5f;font-size:15px;letter-spacing:-0.20px;">总经理(Boss)</div>
<div class="a" style="left:852.2px;top:501.5px;line-height:20px;white-space:pre;color:#888;font-size:15px;letter-spacing:0.35px;">隶属»日常任务/总部领导考察</div>
<div class="a" style="left:814.5px;top:527.8px;line-height:20px;white-space:pre;color:#5f5f5f;font-size:15px;">[日常任务]</div>
<div class="a" style="left:887.6px;top:528.3px;line-height:20px;white-space:pre;color:#3a8dc9;font-size:15px;letter-spacing:0.16px;">任务AT19010001待推进（阶段：新建）</div>
<div class="a" style="left:1162.7px;top:528.8px;line-height:20px;white-space:pre;color:#5f5f5f;font-size:15px;letter-spacing:0.52px;">06/15 - 2019/01/05</div>
<div class="a" style="left:1304.6px;top:528.3px;line-height:20px;white-space:pre;color:#5f5f5f;font-size:15px;letter-spacing:-0.20px;">总经理</div>
<div class="a" style="left:852.2px;top:575.7px;line-height:20px;white-space:pre;color:#888;font-size:15px;letter-spacing:0.73px;">隶属»日常任务/111</div>
<div class="a" style="left:814.5px;top:554.2px;line-height:20px;white-space:pre;color:#5f5f5f;font-size:15px;letter-spacing:-0.10px;">(Boss)</div>
<div class="a" style="left:814.5px;top:661.3px;line-height:20px;white-space:pre;color:#5f5f5f;font-size:15px;">[日常任务]</div>
<div class="a" style="left:887.6px;top:661.8px;line-height:20px;white-space:pre;color:#3a8dc9;font-size:15px;letter-spacing:0.16px;">任务AT21050002待推进（阶段：新建）</div>
<div class="a" style="left:1162.7px;top:662.3px;line-height:20px;white-space:pre;color:#5f5f5f;font-size:15px;letter-spacing:0.46px;">05/31 - 05/31</div>
<div class="a" style="left:1263.4px;top:661.3px;line-height:20px;white-space:pre;color:#5f5f5f;font-size:15px;letter-spacing:-0.20px;">总经理(Boss)</div>
<div class="a" style="left:852.2px;top:683.1px;line-height:20px;white-space:pre;color:#888;font-size:15px;letter-spacing:0.21px;">隶属»日常任务/如何让日本人自己处理完核废水</div>
<div class="a" style="left:814.5px;top:709.1px;line-height:20px;white-space:pre;color:#5f5f5f;font-size:15px;">[日常任务]</div>
<div class="a" style="left:887.6px;top:709.6px;line-height:20px;white-space:pre;color:#3a8dc9;font-size:15px;letter-spacing:0.16px;">任务AT21050001待推进（阶段：新建）</div>
<div class="a" style="left:1162.7px;top:710.1px;line-height:20px;white-space:pre;color:#5f5f5f;font-size:15px;letter-spacing:0.46px;">05/24 - 05/29</div>
<div class="a" style="left:1263.4px;top:709.1px;line-height:20px;white-space:pre;color:#5f5f5f;font-size:15px;letter-spacing:-0.20px;">总经理(Boss)</div>
<div class="a" style="left:852.2px;top:730.7px;line-height:20px;white-space:pre;color:#888;font-size:15px;letter-spacing:0.58px;">隶属»日常任务/王者项目</div>
<div class="a" style="left:814.5px;top:756.9px;line-height:20px;white-space:pre;color:#5f5f5f;font-size:15px;">[日常任务]</div>
<div class="a" style="left:887.6px;top:756.9px;line-height:20px;white-space:pre;color:#3a8dc9;font-size:15px;letter-spacing:0.14px;">任务AT18100003待推进（阶段：未开始）</div>
<div class="a" style="left:1177.2px;top:757.9px;line-height:20px;white-space:pre;color:#5f5f5f;font-size:15px;letter-spacing:0.63px;">2018/10/05 - 2018/10/05</div>
<div class="a" style="left:852.2px;top:805.5px;line-height:20px;white-space:pre;color:#888;font-size:15px;letter-spacing:0.73px;">隶属»日常任务/111</div>
<div class="a" style="left:820.4px;top:783.9px;line-height:20px;white-space:pre;color:#5f5f5f;font-size:15px;letter-spacing:-0.05px;">总经理(Boss)</div>
<div class="a" style="left:814.5px;top:831.6px;line-height:20px;white-space:pre;color:#5f5f5f;font-size:15px;">[项目任务]</div>
<div class="a" style="left:886.6px;top:832.1px;line-height:20px;white-space:pre;color:#3a8dc9;font-size:15px;">照片已经拍好了。</div>
<div class="a" style="left:1013.7px;top:832.6px;line-height:20px;white-space:pre;color:#5f5f5f;font-size:15px;letter-spacing:0.57px;">2015/03/25 -</div>
<div class="a" style="left:1114.5px;top:831.6px;line-height:20px;white-space:pre;color:#5f5f5f;font-size:15px;">技术工程师(Boss等2人)</div>
<div class="a" style="left:852.2px;top:853.6px;line-height:20px;white-space:pre;color:#888;font-size:15px;letter-spacing:0.31px;">隶属»项目任务/先拍照片</div>
<div class="a" style="left:814.5px;top:879.1px;line-height:20px;white-space:pre;color:#5f5f5f;font-size:15px;">[日常任务]</div>
<div class="a" style="left:887.6px;top:879.6px;line-height:20px;white-space:pre;color:#3a8dc9;font-size:15px;letter-spacing:0.13px;">创建任务</div>
<div class="a" style="left:953.6px;top:880.1px;line-height:20px;white-space:pre;color:#5f5f5f;font-size:15px;letter-spacing:0.53px;">06/02 - 06/02</div>
<div class="a" style="left:1054.4px;top:879.1px;line-height:20px;white-space:pre;color:#5f5f5f;font-size:15px;letter-spacing:-0.11px;">总经理(Boss)</div>
<div class="a" style="left:852.2px;top:901.5px;line-height:20px;white-space:pre;color:#888;font-size:15px;letter-spacing:0.27px;">隶属»日常任务/组织建宏五周年文艺活动</div>
<div class="a" style="left:1413.0px;top:196.8px;line-height:20px;white-space:pre;font-weight:bold;color:#3c3c3c;font-size:15px;">待处理流程</div>
<div class="a" style="left:1823.0px;top:196.3px;line-height:20px;white-space:pre;color:#2f8bc9;font-size:15px;letter-spacing:1.50px;">更多</div>
<div class="a" style="left:1855.9px;top:197.3px;line-height:20px;white-space:pre;color:#2f8bc9;font-size:15px;letter-spacing:1.90px;">&gt;&gt;</div>
<div class="a" style="left:1434.5px;top:234.4px;line-height:20px;white-space:pre;color:#3a8dc9;font-size:15px;letter-spacing:0.30px;">处理</div>
<div class="a" style="left:1469.0px;top:234.4px;line-height:20px;white-space:pre;color:#404040;font-size:15px;letter-spacing:0.60px;">265# 申请报销/FF21110001/Boss/11.00/111111</div>
<div class="a" style="left:1810.5px;top:234.4px;line-height:20px;white-space:pre;color:#888;font-size:15px;letter-spacing:2.05px;">11-</div>
<div class="a" style="left:1431.2px;top:261.5px;line-height:20px;white-space:pre;color:#888;font-size:15px;letter-spacing:-0.06px;">02  Boss</div>
<div class="a" style="left:1434.5px;top:288.5px;line-height:20px;white-space:pre;color:#3a8dc9;font-size:15px;letter-spacing:0.30px;">处理</div>
<div class="a" style="left:1469.0px;top:289.0px;line-height:20px;white-space:pre;color:#404040;font-size:15px;letter-spacing:0.34px;">257# 物品借用/ABO21060003/库房/易拉宝 十字立</div>
<div class="a" style="left:1431.0px;top:315.9px;line-height:20px;white-space:pre;color:#404040;font-size:15px;letter-spacing:0.70px;">式/11/Boss</div>
<div class="a" style="left:1516.8px;top:315.9px;line-height:20px;white-space:pre;color:#888;font-size:15px;letter-spacing:0.14px;">06-25  Boss</div>
<div class="a" style="left:1434.5px;top:342.5px;line-height:20px;white-space:pre;color:#3a8dc9;font-size:15px;letter-spacing:0.30px;">处理</div>
<div class="a" style="left:1469.0px;top:343.0px;line-height:20px;white-space:pre;color:#404040;font-size:15px;letter-spacing:0.32px;">256# 申请报销/FF21060001/Boss/666.00/跟客户吃饭</div>
<div class="a" style="left:1841.8px;top:342.5px;line-height:20px;white-space:pre;color:#888;font-size:15px;letter-spacing:1.20px;">06-</div>
<div class="a" style="left:1430.2px;top:369.5px;line-height:20px;white-space:pre;color:#888;font-size:15px;letter-spacing:0.09px;">13  Boss</div>
<div class="a" style="left:1434.5px;top:396.5px;line-height:20px;white-space:pre;color:#3a8dc9;font-size:15px;letter-spacing:0.30px;">处理</div>
<div class="a" style="left:1469.0px;top:396.5px;line-height:20px;white-space:pre;color:#404040;font-size:15px;letter-spacing:0.65px;">248# 请假/病假/HAQ21050001/齐石/21-5-25至21-5-25/去</div>
<div class="a" style="left:1431.0px;top:424.0px;line-height:20px;white-space:pre;color:#404040;font-size:15px;letter-spacing:1.00px;">看病</div>
<div class="a" style="left:1468.0px;top:424.0px;line-height:20px;white-space:pre;color:#888;font-size:15px;letter-spacing:0.25px;">05-25  齐石</div>
<div class="a" style="left:1434.5px;top:450.5px;line-height:20px;white-space:pre;color:#3a8dc9;font-size:15px;letter-spacing:0.30px;">处理</div>
<div class="a" style="left:1469.0px;top:451.0px;line-height:20px;white-space:pre;color:#404040;font-size:15px;letter-spacing:0.53px;">247# 补签到/HAB21050005/齐石/2999/12/31 23:59/外出办</div>
<div class="a" style="left:1430.6px;top:477.5px;line-height:20px;white-space:pre;color:#404040;font-size:15px;">事</div>
<div class="a" style="left:1453.9px;top:478.0px;line-height:20px;white-space:pre;color:#888;font-size:15px;letter-spacing:0.12px;">05-25  齐石</div>
<div class="a" style="left:1434.5px;top:504.6px;line-height:20px;white-space:pre;color:#3a8dc9;font-size:15px;letter-spacing:0.30px;">处理</div>
<div class="a" style="left:1469.0px;top:505.1px;line-height:20px;white-space:pre;color:#404040;font-size:15px;letter-spacing:0.40px;">242# 借款申请/FB21050006/张高大/11,111.00/拍咯咯看</div>
<div class="a" style="left:1438.6px;top:532.1px;line-height:20px;white-space:pre;color:#888;font-size:15px;letter-spacing:0.32px;">05-24  张高大</div>
<div class="a" style="left:1434.5px;top:558.7px;line-height:20px;white-space:pre;color:#3a8dc9;font-size:15px;letter-spacing:0.30px;">处理</div>
<div class="a" style="left:1469.0px;top:559.2px;line-height:20px;white-space:pre;color:#404040;font-size:15px;letter-spacing:0.40px;">240# 借款申请/FB21050004/张高大/10,000.00/11</div>
<div class="a" style="left:1819.3px;top:558.7px;line-height:20px;white-space:pre;color:#888;font-size:15px;letter-spacing:0.75px;">05-24</div>
<div class="a" style="left:1438.6px;top:586.2px;line-height:20px;white-space:pre;color:#888;font-size:15px;letter-spacing:-0.05px;">张高大</div>
<div class="a" style="left:1434.5px;top:612.8px;line-height:20px;white-space:pre;color:#3a8dc9;font-size:15px;letter-spacing:0.30px;">处理</div>
<div class="a" style="left:1469.0px;top:613.3px;line-height:20px;white-space:pre;color:#404040;font-size:15px;letter-spacing:0.35px;">239# 借款申请/FB21050002/张高大/1,000.00/出差</div>
<div class="a" style="left:1823.0px;top:612.8px;line-height:20px;white-space:pre;color:#888;font-size:15px;letter-spacing:0.85px;">05-24</div>
<div class="a" style="left:1438.6px;top:640.3px;line-height:20px;white-space:pre;color:#888;font-size:15px;letter-spacing:-0.05px;">张高大</div>
<div class="a" style="left:1434.5px;top:666.9px;line-height:20px;white-space:pre;color:#3a8dc9;font-size:15px;letter-spacing:0.30px;">处理</div>
<div class="a" style="left:1469.0px;top:667.4px;line-height:20px;white-space:pre;color:#404040;font-size:15px;letter-spacing:0.32px;">238# 借款申请/FB21050001/张高大/1,000.00/因住房出差</div>
<div class="a" style="left:1438.6px;top:694.4px;line-height:20px;white-space:pre;color:#888;font-size:15px;letter-spacing:0.32px;">05-24  张高大</div>
<div class="a" style="left:1434.5px;top:721.0px;line-height:20px;white-space:pre;color:#3a8dc9;font-size:15px;letter-spacing:0.30px;">处理</div>
<div class="a" style="left:1469.0px;top:721.0px;line-height:20px;white-space:pre;color:#404040;font-size:15px;letter-spacing:-0.07px;">236# 开机</div>
<div class="a" style="left:1544.6px;top:721.0px;line-height:20px;white-space:pre;color:#888;font-size:15px;letter-spacing:0.11px;">05-24  Boss</div>
<div class="a" style="left:1412.5px;top:783.6px;line-height:20px;white-space:pre;font-weight:bold;color:#3c3c3c;font-size:15px;">我发起的流程</div>
<div class="a" style="left:1822.9px;top:783.6px;line-height:20px;white-space:pre;color:#2f8bc9;font-size:15px;letter-spacing:1.50px;">更多</div>
<div class="a" style="left:1855.8px;top:784.6px;line-height:20px;white-space:pre;color:#2f8bc9;font-size:15px;letter-spacing:1.90px;">&gt;&gt;</div>
<div class="a" style="left:1437.0px;top:821.3px;line-height:20px;white-space:pre;color:#fff;font-size:15px;">运行</div>
<div class="a" style="left:1477.0px;top:821.8px;line-height:20px;white-space:pre;color:#3a8dc9;font-size:15px;letter-spacing:-0.40px;">查看</div>
<div class="a" style="left:1514.7px;top:821.3px;line-height:20px;white-space:pre;color:#3a8dc9;font-size:15px;letter-spacing:-0.50px;">催办</div>
<div class="a" style="left:1548.3px;top:821.3px;line-height:20px;white-space:pre;color:#404040;font-size:15px;letter-spacing:0.04px;">266# 申请报</div>
<div class="a" style="left:1437.0px;top:875.8px;line-height:20px;white-space:pre;color:#fff;font-size:15px;">运行</div>
<div class="a" style="left:1477.0px;top:875.8px;line-height:20px;white-space:pre;color:#3a8dc9;font-size:15px;letter-spacing:-0.40px;">处理</div>
<div class="a" style="left:1514.7px;top:875.8px;line-height:20px;white-space:pre;color:#3a8dc9;font-size:15px;letter-spacing:-0.50px;">催办</div>
<div class="a" style="left:1548.3px;top:875.8px;line-height:20px;white-space:pre;color:#404040;font-size:15px;letter-spacing:0.04px;">265# 申请报</div>
<div class="a" style="left:1431.3px;top:849.0px;line-height:20px;white-space:pre;color:#404040;font-size:15px;letter-spacing:0.47px;">销/FF21110002/Boss/2,222.00/333</div>
<div class="a" style="left:1684.4px;top:849.0px;line-height:20px;white-space:pre;color:#888;font-size:15px;letter-spacing:0.26px;">11-06  Boss</div>
<div class="a" style="left:1431.3px;top:902.5px;line-height:20px;white-space:pre;color:#404040;font-size:15px;letter-spacing:0.54px;">销/FF21110001/Boss/11.00/111111</div>
<div class="a" style="left:1684.4px;top:902.5px;line-height:20px;white-space:pre;color:#888;font-size:15px;letter-spacing:0.26px;">11-02  Boss</div>
<div class="a" style="left:890.6px;top:395.7px;line-height:20px;white-space:pre;color:#dd2a10;font-weight:bold;font-size:15px;letter-spacing:1.70px;">13</div>
<div class="a" style="left:835.7px;top:435.8px;line-height:20px;white-space:pre;color:#fff;font-weight:bold;font-size:15px;">2</div>
<div class="a" style="left:834.0px;top:618.6px;line-height:20px;white-space:pre;color:#fff;font-weight:bold;font-size:15px;">11</div>
<div class="a" style="left:1499.0px;top:196.5px;line-height:20px;white-space:pre;color:#dd2a10;font-weight:bold;font-size:15px;letter-spacing:0.50px;">12</div>
<div class="a" style="left:1512.0px;top:783.6px;line-height:20px;white-space:pre;color:#fff;font-weight:bold;font-size:15px;letter-spacing:2.00px;">135</div>
</body></html>
